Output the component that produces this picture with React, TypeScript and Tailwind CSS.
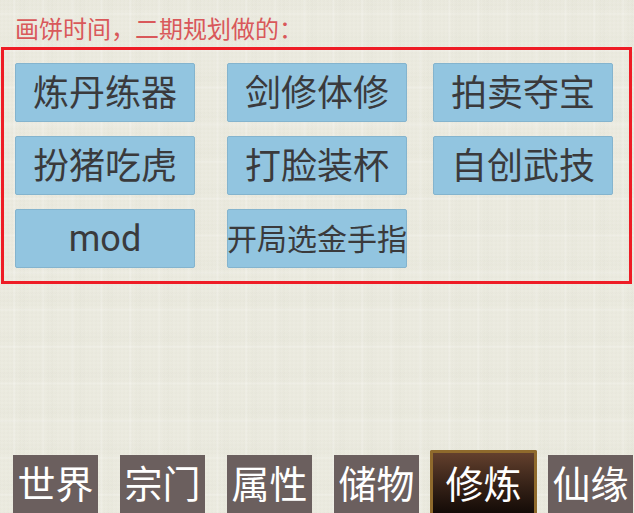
import React from 'react';

const plans = ['炼丹练器', '剑修体修', '拍卖夺宝', '扮猪吃虎', '打脸装杯', '自创武技', 'mod', '开局选金手指'];

const tabs = [
  { name: '世界', cls: 'w-[85px] mr-[22px]' },
  { name: '宗门', cls: 'w-[85px] mr-[22px]' },
  { name: '属性', cls: 'w-[85px] mr-[22px]' },
  { name: '储物', cls: 'w-[85px] mr-[11px]' },
];

export default function App() {
  return (
    <div className="w-[634px] h-[513px] overflow-hidden flex flex-col font-['Noto_Sans_CJK_SC','Noto_Sans',sans-serif] bg-[#ecebe0] bg-[repeating-linear-gradient(90deg,rgba(255,255,255,0)_0px,rgba(255,255,255,0)_13px,rgba(255,255,255,0.22)_14px,rgba(255,255,255,0)_16px,rgba(120,125,95,0.015)_23px,rgba(255,255,255,0)_29px),repeating-linear-gradient(0deg,rgba(255,255,255,0)_0px,rgba(255,255,255,0)_17px,rgba(255,255,255,0.22)_18px,rgba(255,255,255,0)_20px,rgba(120,125,95,0.015)_27px,rgba(255,255,255,0)_37px),repeating-linear-gradient(90deg,rgba(120,125,95,0.02)_0px,rgba(255,255,255,0.04)_2px,rgba(120,125,95,0.02)_4px),repeating-linear-gradient(0deg,rgba(120,125,95,0.02)_0px,rgba(255,255,255,0.04)_2px,rgba(120,125,95,0.02)_4px)]">
      {/* Title */}
      <div className="h-[47px] pl-[15px] pt-[10px] text-[24px] leading-[36px] text-[#d9585a] whitespace-nowrap">
        画饼时间，二期规划做的：
      </div>

      {/* Plans box */}
      <div className="ml-px w-[631px] h-[237px] border-[3px] border-[#ee1c25] pl-[11px] pt-[13px]">
        <div className="grid grid-cols-[212px_206px_180px] auto-rows-[59px] gap-y-[14px]">
          {plans.map((p) => (
            <div
              key={p}
              className={`w-[180px] h-[59px] flex items-center justify-center rounded-[2px] bg-[#92c5e0] border border-[#84b4ce] text-[#3a3a3c] whitespace-nowrap ${
                p.length > 4 ? 'text-[30px] pb-[2px]' : 'text-[36px] pb-[5px]'
              } ${p === 'mod' ? "font-['Roboto',sans-serif] !pb-0" : ''}`}
            >
              {p}
            </div>
          ))}
        </div>
      </div>

      {/* Bottom tabs */}
      <div className="mt-auto h-[63px] pl-[13px] flex items-end">
        {tabs.map((t) => (
          <div
            key={t.name}
            className={`${t.cls} h-[58px] flex items-center justify-center pb-[6px] bg-[#6b5f5e] text-white text-[38px] whitespace-nowrap`}
          >
            {t.name}
          </div>
        ))}
        <div className="w-[107px] h-[63px] mr-[11px] flex items-center justify-center pb-[4px] rounded-t-[2px] border-[3px] border-b-0 border-[#8f6a2c] bg-gradient-to-b from-[#63402d] to-[#140b07] text-white text-[38px] whitespace-nowrap">
          修炼
        </div>
        <div className="w-[85px] h-[58px] flex items-center justify-center pb-[6px] bg-[#6b5f5e] text-white text-[38px] whitespace-nowrap">
          仙缘
        </div>
      </div>
    </div>
  );
}
